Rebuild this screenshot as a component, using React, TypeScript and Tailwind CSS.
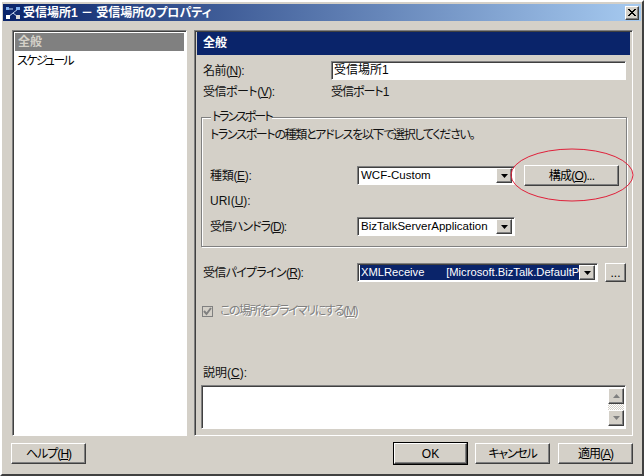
import React from 'react';

const raised = 'border border-t-white border-l-white border-r-[#404040] border-b-[#404040] shadow-[inset_-1px_-1px_0_#808080] bg-[#d4d0c8]';
const sunken = 'border border-t-[#808080] border-l-[#808080] border-r-white border-b-white shadow-[inset_1px_1px_0_#404040] bg-white';

function Btn({ children, className }: { children: React.ReactNode; className: string }) {
  return <div className={`${raised} flex items-center justify-center text-black ${className}`}>{children}</div>;
}

function Arrow({ color = 'black', up = false }: { color?: string; up?: boolean }) {
  return (
    <svg width="7" height="4" viewBox="0 0 7 4">
      <path d={up ? 'M3.5 0L7 4H0Z' : 'M0 0H7L3.5 4Z'} fill={color} />
    </svg>
  );
}

function Combo({ children, className, selected }: { children: React.ReactNode; className: string; selected?: boolean }) {
  return (
    <div className={`${sunken} flex items-center pl-[2px] pr-[2px] h-[19px] ${className}`}>
      <div className={`flex-1 min-w-0 overflow-hidden whitespace-nowrap pl-[1px] h-[15px] leading-[15px] ${selected ? 'text-[11.2px] bg-[#0a246a] text-white' : 'text-[11.5px] text-black'}`}>
        {children}
      </div>
      <div className={`${raised} flex items-center justify-center w-[16px] h-[15px] shrink-0`}>
        <Arrow />
      </div>
    </div>
  );
}

function U({ children }: { children: React.ReactNode }) {
  return <span className="underline">{children}</span>;
}

export default function App() {
  return (
    <div
      className="relative w-[644px] h-[476px] overflow-hidden bg-[#d4d0c8] border-r-2 border-b-2 border-r-[#404040] border-b-[#404040] border-t-2 border-l-2 border-t-white border-l-white text-[12px] text-[#111] [font-family:'Liberation_Sans','Noto_Sans_CJK_JP',sans-serif] [font-feature-settings:'palt']"
    >
      {/* Title bar */}
      <div className="ml-[1px] mr-[1px] mt-[2px] h-[17px] flex items-center pl-[2px] pr-[2px] bg-[linear-gradient(to_right,#0a246a,#a6caf0)]">
        <svg width="16" height="16" viewBox="0 0 16 16" className="shrink-0">
          <path d="M3 12L8 8M8 8L13 4M8 8L13 12M3 4H8" stroke="#c8d8f0" strokeWidth="1" fill="none" />
          <rect x="1" y="10" width="4" height="4" fill="#fff" />
          <rect x="11" y="10" width="4" height="4" fill="#d8d8d8" />
          <rect x="11" y="2" width="4" height="3" fill="#7fb0f0" />
          <rect x="1" y="2" width="3" height="3" fill="#7fb0f0" />
        </svg>
        <span className="ml-[2px] font-bold text-[12px] text-white whitespace-nowrap">受信場所1 － 受信場所のプロパティ</span>
        <Btn className="ml-auto w-[14px] h-[14px]">
          <svg width="8" height="7" viewBox="0 0 8 7">
            <path d="M0 0L7 7M1 0L8 7M7 0L0 7M8 0L1 7" stroke="black" strokeWidth="1" />
          </svg>
        </Btn>
      </div>

      {/* Body */}
      <div className="flex mt-[9px] ml-[10px] mr-[9px] h-[406px] gap-[7px]">
        <div className={`${sunken} w-[175px] p-[2px] shrink-0`}>
          <div className="h-[18px] leading-[18px] pl-[3px] bg-[#808080] text-[#d4d0c8] font-bold">全般</div>
          <div className="h-[19px] leading-[20px] pl-[2px] text-black tracking-[-1.7px]">スケジュール</div>
        </div>

        <div className="flex-1 min-w-0 border border-t-[#808080] border-l-[#808080] border-r-white border-b-white shadow-[inset_1px_1px_0_#404040] pt-[1px] pl-[2px]">
          <div className="h-[23px] mr-[2px] bg-[#0a246a] text-white font-bold text-[12px] leading-[22px] pl-[6px]">全般</div>

          <div className="pl-[6px] pr-[6px]">
            <div className="flex items-center mt-[6px] h-[19px]">
              <span className="w-[128px] shrink-0 tracking-[-0.5px]">名前(<U>N</U>):</span>
              <div className={`${sunken} flex-1 h-[19px] leading-[16px] pl-[2px] text-black`}>受信場所1</div>
            </div>
            <div className="flex items-center mt-[3px] h-[18px]">
              <span className="w-[128px] shrink-0 tracking-[-0.5px]">受信ポート(<U>V</U>):</span>
              <span className="tracking-[-1px]">受信ポート1</span>
            </div>

            {/* Transport group */}
            <div className="relative -ml-[2px] -mr-[1px] mt-[16px] h-[130px] border border-[#808080] shadow-[inset_1px_1px_0_white,1px_1px_0_white] pl-[8px] pr-[7px]">
              <span className="absolute left-[9px] -top-[8px] bg-[#d4d0c8] px-[1px] leading-[14px] tracking-[-2px]">トランスポート</span>
              <div className="mt-[9px] h-[16px] leading-[16px] whitespace-nowrap tracking-[-1.3px]">トランスポートの種類とアドレスを以下で選択してください。</div>
              <div className="flex items-center mt-[22px] h-[21px]">
                <span className="w-[147px] shrink-0 tracking-[-0.3px]">種類(<U>E</U>):</span>
                <Combo className="w-[158px]">WCF-Custom</Combo>
                <Btn className="ml-[9px] w-[95px] h-[21px] tracking-[-0.7px]">構成(<U>O</U>)...</Btn>
              </div>
              <div className="mt-[6px] h-[18px] leading-[18px]">URI(<U>U</U>):</div>
              <div className="flex items-center mt-[7px] h-[19px]">
                <span className="w-[147px] shrink-0 tracking-[-1px]">受信ハンドラ(<U>D</U>):</span>
                <Combo className="w-[158px]">BizTalkServerApplication</Combo>
              </div>
            </div>

            {/* Pipeline */}
            <div className="flex items-center mt-[16px] h-[19px]">
              <span className="w-[154px] shrink-0 tracking-[-0.7px]">受信パイプライン(<U>R</U>):</span>
              <Combo className="w-[241px]" selected>
                <span className="whitespace-pre">XMLReceive       [Microsoft.BizTalk.DefaultPipelines</span>
              </Combo>
              <Btn className="ml-[7px] w-[22px] h-[19px]">...</Btn>
            </div>

            <label className="flex items-center -ml-[1px] mt-[20px] h-[18px] text-[#808080] [text-shadow:1px_1px_0_white] tracking-[-1.5px]">
              <span className="w-[11px] h-[11px] border border-[#808080] bg-[#d4d0c8] flex items-center justify-center mr-[7px]">
                <svg width="9" height="9" viewBox="0 0 9 9">
                  <path d="M1 4L3.5 7L8 1" stroke="#808080" strokeWidth="2" fill="none" />
                </svg>
              </span>
              この場所をプライマリにする(<U>M</U>)
            </label>

            <div className="mt-[45px] h-[16px] leading-[16px]">説明(<U>C</U>):</div>
            <div className={`${sunken} -ml-[2px] mt-[4px] h-[44px] flex justify-end pr-[1px] py-[2px]`}>
              <div className="w-[16px] flex flex-col bg-[repeating-conic-gradient(#d4d0c8_0_25%,white_0_50%)] bg-[length:2px_2px]">
                <div className={`${raised} h-[16px] flex items-center justify-center`}>
                  <Arrow color="#808080" up />
                </div>
                <div className="flex-1" />
                <div className={`${raised} h-[16px] flex items-center justify-center`}>
                  <Arrow color="#808080" />
                </div>
              </div>
            </div>
          </div>
        </div>
      </div>

      {/* Footer buttons */}
      <div className="flex items-center mt-[7px] ml-[9px] mr-[9px]">
        <Btn className="w-[75px] h-[21px] tracking-[-1px]">ヘルプ(<U>H</U>)</Btn>
        <div className="ml-auto flex gap-[8px]">
          <Btn className="w-[73px] h-[21px] outline outline-1 outline-black">OK</Btn>
          <Btn className="w-[75px] h-[21px] tracking-[-1.2px]">キャンセル</Btn>
          <Btn className="w-[75px] h-[21px] tracking-[-1px]">適用(<U>A</U>)</Btn>
        </div>
      </div>

      {/* Hand-drawn annotation */}
      <svg className="absolute left-[506px] top-[146px] pointer-events-none" width="130" height="56" viewBox="0 0 130 56">
        <ellipse cx="64" cy="27" rx="61" ry="26" fill="none" stroke="#e0203a" strokeWidth="1" />
      </svg>
    </div>
  );
}
